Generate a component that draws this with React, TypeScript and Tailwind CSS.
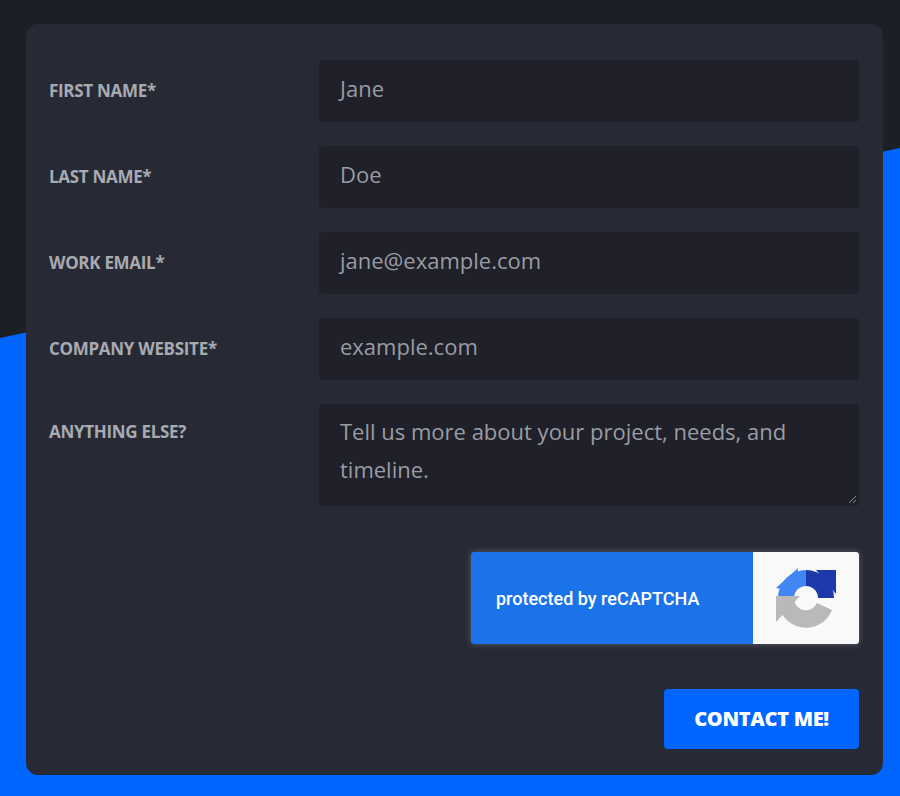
export default function App() {
  const font = { fontFamily: '"Open Sans", "Liberation Sans", sans-serif' };
  const rows = [
    ["FIRST NAME*", "Jane"],
    ["LAST NAME*", "Doe"],
    ["WORK EMAIL*", "jane@example.com"],
    ["COMPANY WEBSITE*", "example.com"],
  ];
  return (
    <div className="relative w-[900px] h-[796px] bg-[#1d1f27] overflow-hidden" style={font}>
      <svg className="absolute inset-0" width="900" height="796">
        <polygon points="0,338 900,148 900,796 0,796" fill="#0066ff" />
      </svg>
      <div className="relative ml-[26px] mt-[24px] w-[857px] h-[751px] rounded-[12px] bg-[#272a35] pl-[23px] pr-[24px] pt-[36px] flex flex-col">
        {rows.map(([l, v]) => (
          <div key={l} className="flex items-center mb-[24px]">
            <div className="w-[270px] text-[#a8aab1] font-bold text-[17px] tracking-[-0.3px]">{l}</div>
            <div className="w-[540px] h-[62px] rounded-[4px] bg-[#1f2029] pl-[21px] pb-[6px] flex items-center text-[22px] text-[#9a9ca4]">{v}</div>
          </div>
        ))}
        <div className="flex items-start">
          <div className="w-[270px] pt-[15px] text-[#a8aab1] font-bold text-[17px] tracking-[-0.3px]">ANYTHING ELSE?</div>
          <div className="relative w-[540px] h-[102px] rounded-[4px] bg-[#1f2029] pl-[21px] pr-[20px] pt-[8px] text-[22px] leading-[38px] text-[#9a9ca4]">
            Tell us more about your project, needs, and timeline.
            <svg className="absolute right-[2px] bottom-[2px]" width="10" height="10"><path d="M9 2L2 9M9 6L6 9" stroke="#8a8c94" strokeWidth="1" /></svg>
          </div>
        </div>
        <div className="flex justify-end mt-[46px]">
          <div className="flex w-[388px] h-[92px] rounded-[3px] overflow-hidden shadow-[0_0_6px_rgba(255,255,255,0.25)]">
            <div className="flex-1 bg-[#1a73e8] flex items-center pl-[25px] text-white text-[18px] font-medium" style={{ fontFamily: "Roboto, sans-serif" }}>protected by reCAPTCHA</div>
            <div className="w-[106px] bg-[#f9f9f9] flex items-center justify-center">
              <svg width="64" height="64" viewBox="0 0 64 64">
                <path d="M32 4 A28 28 0 0 1 60 32 L44 32 A12 12 0 0 0 32 20 Z" fill="#1c3aa9" />
                <polygon points="42,4 62,4 62,28" fill="#1c3aa9" />
                <path d="M4 32 A28 28 0 0 1 32 4 L32 20 A12 12 0 0 0 20 32 Z" fill="#4285f4" />
                <polygon points="2,22 24,2 22,26" fill="#4285f4" />
                <path d="M4 32 L20 32 A12 12 0 0 0 43 37 L58 44 A28 28 0 0 1 4 32 Z" fill="#b9b9b9" />
                <polygon points="2,30 26,30 2,56" fill="#b9b9b9" />
              </svg>
            </div>
          </div>
        </div>
        <div className="flex justify-end mt-[45px]">
          <button className="w-[195px] h-[60px] rounded-[4px] bg-[#0066ff] text-white text-[20px] tracking-[-0.3px]" style={{ fontFamily: '"Open Sans", sans-serif', fontWeight: 800 }}>CONTACT ME!</button>
        </div>
      </div>
    </div>
  );
}
